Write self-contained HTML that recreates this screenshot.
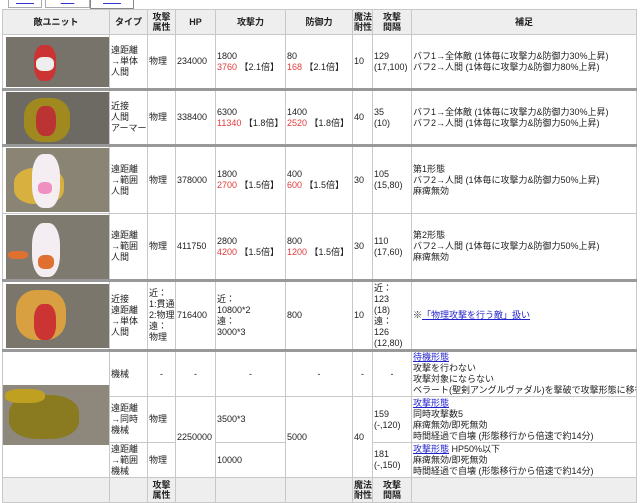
<!DOCTYPE html>
<html><head><meta charset="utf-8"><style>
body{margin:0;width:640px;height:485px;overflow:hidden;background:#fff;font-family:"Liberation Sans","Noto Sans CJK JP",sans-serif;font-size:9px;color:#222;position:relative}
.tab{position:absolute;top:-4px;height:11px;border:1px solid #aaa;border-top:none;background:#fff}
.tab a{display:block;text-align:center;color:#33c;text-decoration:underline;font-size:8px;line-height:8px}
table{position:absolute;left:2px;top:9px;border-collapse:collapse;table-layout:fixed;width:634px}
td,th{border:1px solid #c8c8c8;padding:0 1px;vertical-align:middle;line-height:11px;overflow:hidden;white-space:nowrap}
th{background:#eee;font-weight:bold;text-align:center;font-size:9px;line-height:10px}
tr.sep td{border-top:3px solid #999}
.r{color:#e03a3a}
.c{text-align:center}
a{color:#22c}
.img{display:block;margin:0 auto 0 2px;width:104px;background:#6d6a63;position:relative;overflow:hidden}
.img i{position:absolute;display:block;border-radius:40%}
</style></head><body>
<div class="tab" style="left:8px;width:32px"><a>____</a></div>
<div class="tab" style="left:45px;width:43px"><a>___</a></div>
<div class="tab" style="left:90px;width:42px;border:1px solid #888;border-top:none;height:12px"><a>____</a></div>
<table>
<colgroup><col style="width:107px"><col style="width:38px"><col style="width:28px"><col style="width:40px"><col style="width:70px"><col style="width:67px"><col style="width:20px"><col style="width:39px"><col style="width:225px"></colgroup>
<tr style="height:25px"><th>敵ユニット</th><th>タイプ</th><th>攻撃<br>属性</th><th>HP</th><th>攻撃力</th><th>防御力</th><th>魔法<br>耐性</th><th>攻撃<br>間隔</th><th>補足</th></tr>
<tr style="height:55px"><td><div class="img" style="height:50px;background:#77736b"><i style="left:28px;top:8px;width:22px;height:36px;background:#c33"></i><i style="left:30px;top:20px;width:18px;height:14px;background:#eee"></i></div></td><td>遠距離<br>→単体<br>人間</td><td>物理</td><td>234000</td><td>1800<br><span class="r">3760</span> 【2.1倍】</td><td>80<br><span class="r">168</span> 【2.1倍】</td><td>10</td><td>129<br>(17,100)</td><td>バフ1→全体敵 (1体毎に攻撃力&amp;防御力30%上昇)<br>バフ2→人間 (1体毎に攻撃力&amp;防御力80%上昇)</td></tr>
<tr class="sep" style="height:56px"><td><div class="img" style="height:52px"><i style="left:18px;top:6px;width:46px;height:44px;background:#a08a20"></i><i style="left:30px;top:14px;width:20px;height:30px;background:#b33"></i></div></td><td>近接<br>人間<br>アーマー</td><td>物理</td><td>338400</td><td>6300<br><span class="r">11340</span> 【1.8倍】</td><td>1400<br><span class="r">2520</span> 【1.8倍】</td><td>40</td><td>35<br>(10)</td><td>バフ1→全体敵 (1体毎に攻撃力&amp;防御力30%上昇)<br>バフ2→人間 (1体毎に攻撃力&amp;防御力50%上昇)</td></tr>
<tr class="sep" style="height:68px"><td><div class="img" style="height:64px;background:#8a8474"><i style="left:8px;top:20px;width:50px;height:36px;background:#d8b040"></i><i style="left:26px;top:6px;width:28px;height:54px;background:#f4eef2"></i><i style="left:32px;top:34px;width:14px;height:12px;background:#f090c0"></i></div></td><td>遠距離<br>→範囲<br>人間</td><td>物理</td><td>378000</td><td>1800<br><span class="r">2700</span> 【1.5倍】</td><td>400<br><span class="r">600</span> 【1.5倍】</td><td>30</td><td>105<br>(15,80)</td><td>第1形態<br>バフ2→人間 (1体毎に攻撃力&amp;防御力50%上昇)<br>麻痺無効</td></tr>
<tr style="height:67px"><td><div class="img" style="height:64px;background:#7e7a70"><i style="left:26px;top:8px;width:28px;height:54px;background:#f4eef2"></i><i style="left:32px;top:40px;width:16px;height:14px;background:#e07030"></i><i style="left:2px;top:36px;width:20px;height:8px;background:#e07030"></i></div></td><td>遠距離<br>→範囲<br>人間</td><td>物理</td><td>411750</td><td>2800<br><span class="r">4200</span> 【1.5倍】</td><td>800<br><span class="r">1200</span> 【1.5倍】</td><td>30</td><td>110<br>(17,60)</td><td>第2形態<br>バフ2→人間 (1体毎に攻撃力&amp;防御力50%上昇)<br>麻痺無効</td></tr>
<tr class="sep" style="height:70px"><td><div class="img" style="height:64px;background:#7a766c"><i style="left:10px;top:6px;width:50px;height:50px;background:#d8a040"></i><i style="left:28px;top:20px;width:22px;height:36px;background:#c33"></i></div></td><td>近接<br>遠距離<br>→単体<br>人間</td><td>近：<br>1:貫通<br>2:物理<br>遠：<br>物理</td><td>716400</td><td>近：<br>10800*2<br>遠：<br>3000*3</td><td>800</td><td>10</td><td>近：<br>123<br>(18)<br>遠：<br>126<br>(12,80)</td><td>※<a href="#">「物理攻撃を行う敵」扱い</a></td></tr>
<tr class="sep" style="height:45px"><td rowspan="3" style="padding:0"><div class="img" style="height:60px;width:106px;margin:0;background:#8e887c"><i style="left:6px;top:10px;width:70px;height:44px;background:#8a7a20"></i><i style="left:2px;top:4px;width:40px;height:14px;background:#c0a020"></i></div></td><td>機械</td><td class="c">-</td><td class="c">-</td><td class="c">-</td><td class="c">-</td><td class="c">-</td><td class="c">-</td><td><a href="#">待機形態</a><br>攻撃を行わない<br>攻撃対象にならない<br>ベラート(聖剣アングルヴァダル)を撃破で攻撃形態に移行</td></tr>
<tr style="height:46px"><td>遠距離<br>→同時<br>機械</td><td>物理</td><td rowspan="2">2250000</td><td>3500*3</td><td rowspan="2">5000</td><td rowspan="2">40</td><td>159<br>(-,120)</td><td><a href="#">攻撃形態</a><br>同時攻撃数5<br>麻痺無効/即死無効<br>時間経過で自壊 (形態移行から倍速で約14分)</td></tr>
<tr style="height:35px"><td>遠距離<br>→範囲<br>機械</td><td>物理</td><td>10000</td><td>181<br>(-,150)</td><td><a href="#">攻撃形態</a> HP50%以下<br>麻痺無効/即死無効<br>時間経過で自壊 (形態移行から倍速で約14分)</td></tr>
<tr style="height:25px"><th></th><th></th><th>攻撃<br>属性</th><th></th><th></th><th></th><th>魔法<br>耐性</th><th>攻撃<br>間隔</th><th></th></tr>
</table>
</body></html>
